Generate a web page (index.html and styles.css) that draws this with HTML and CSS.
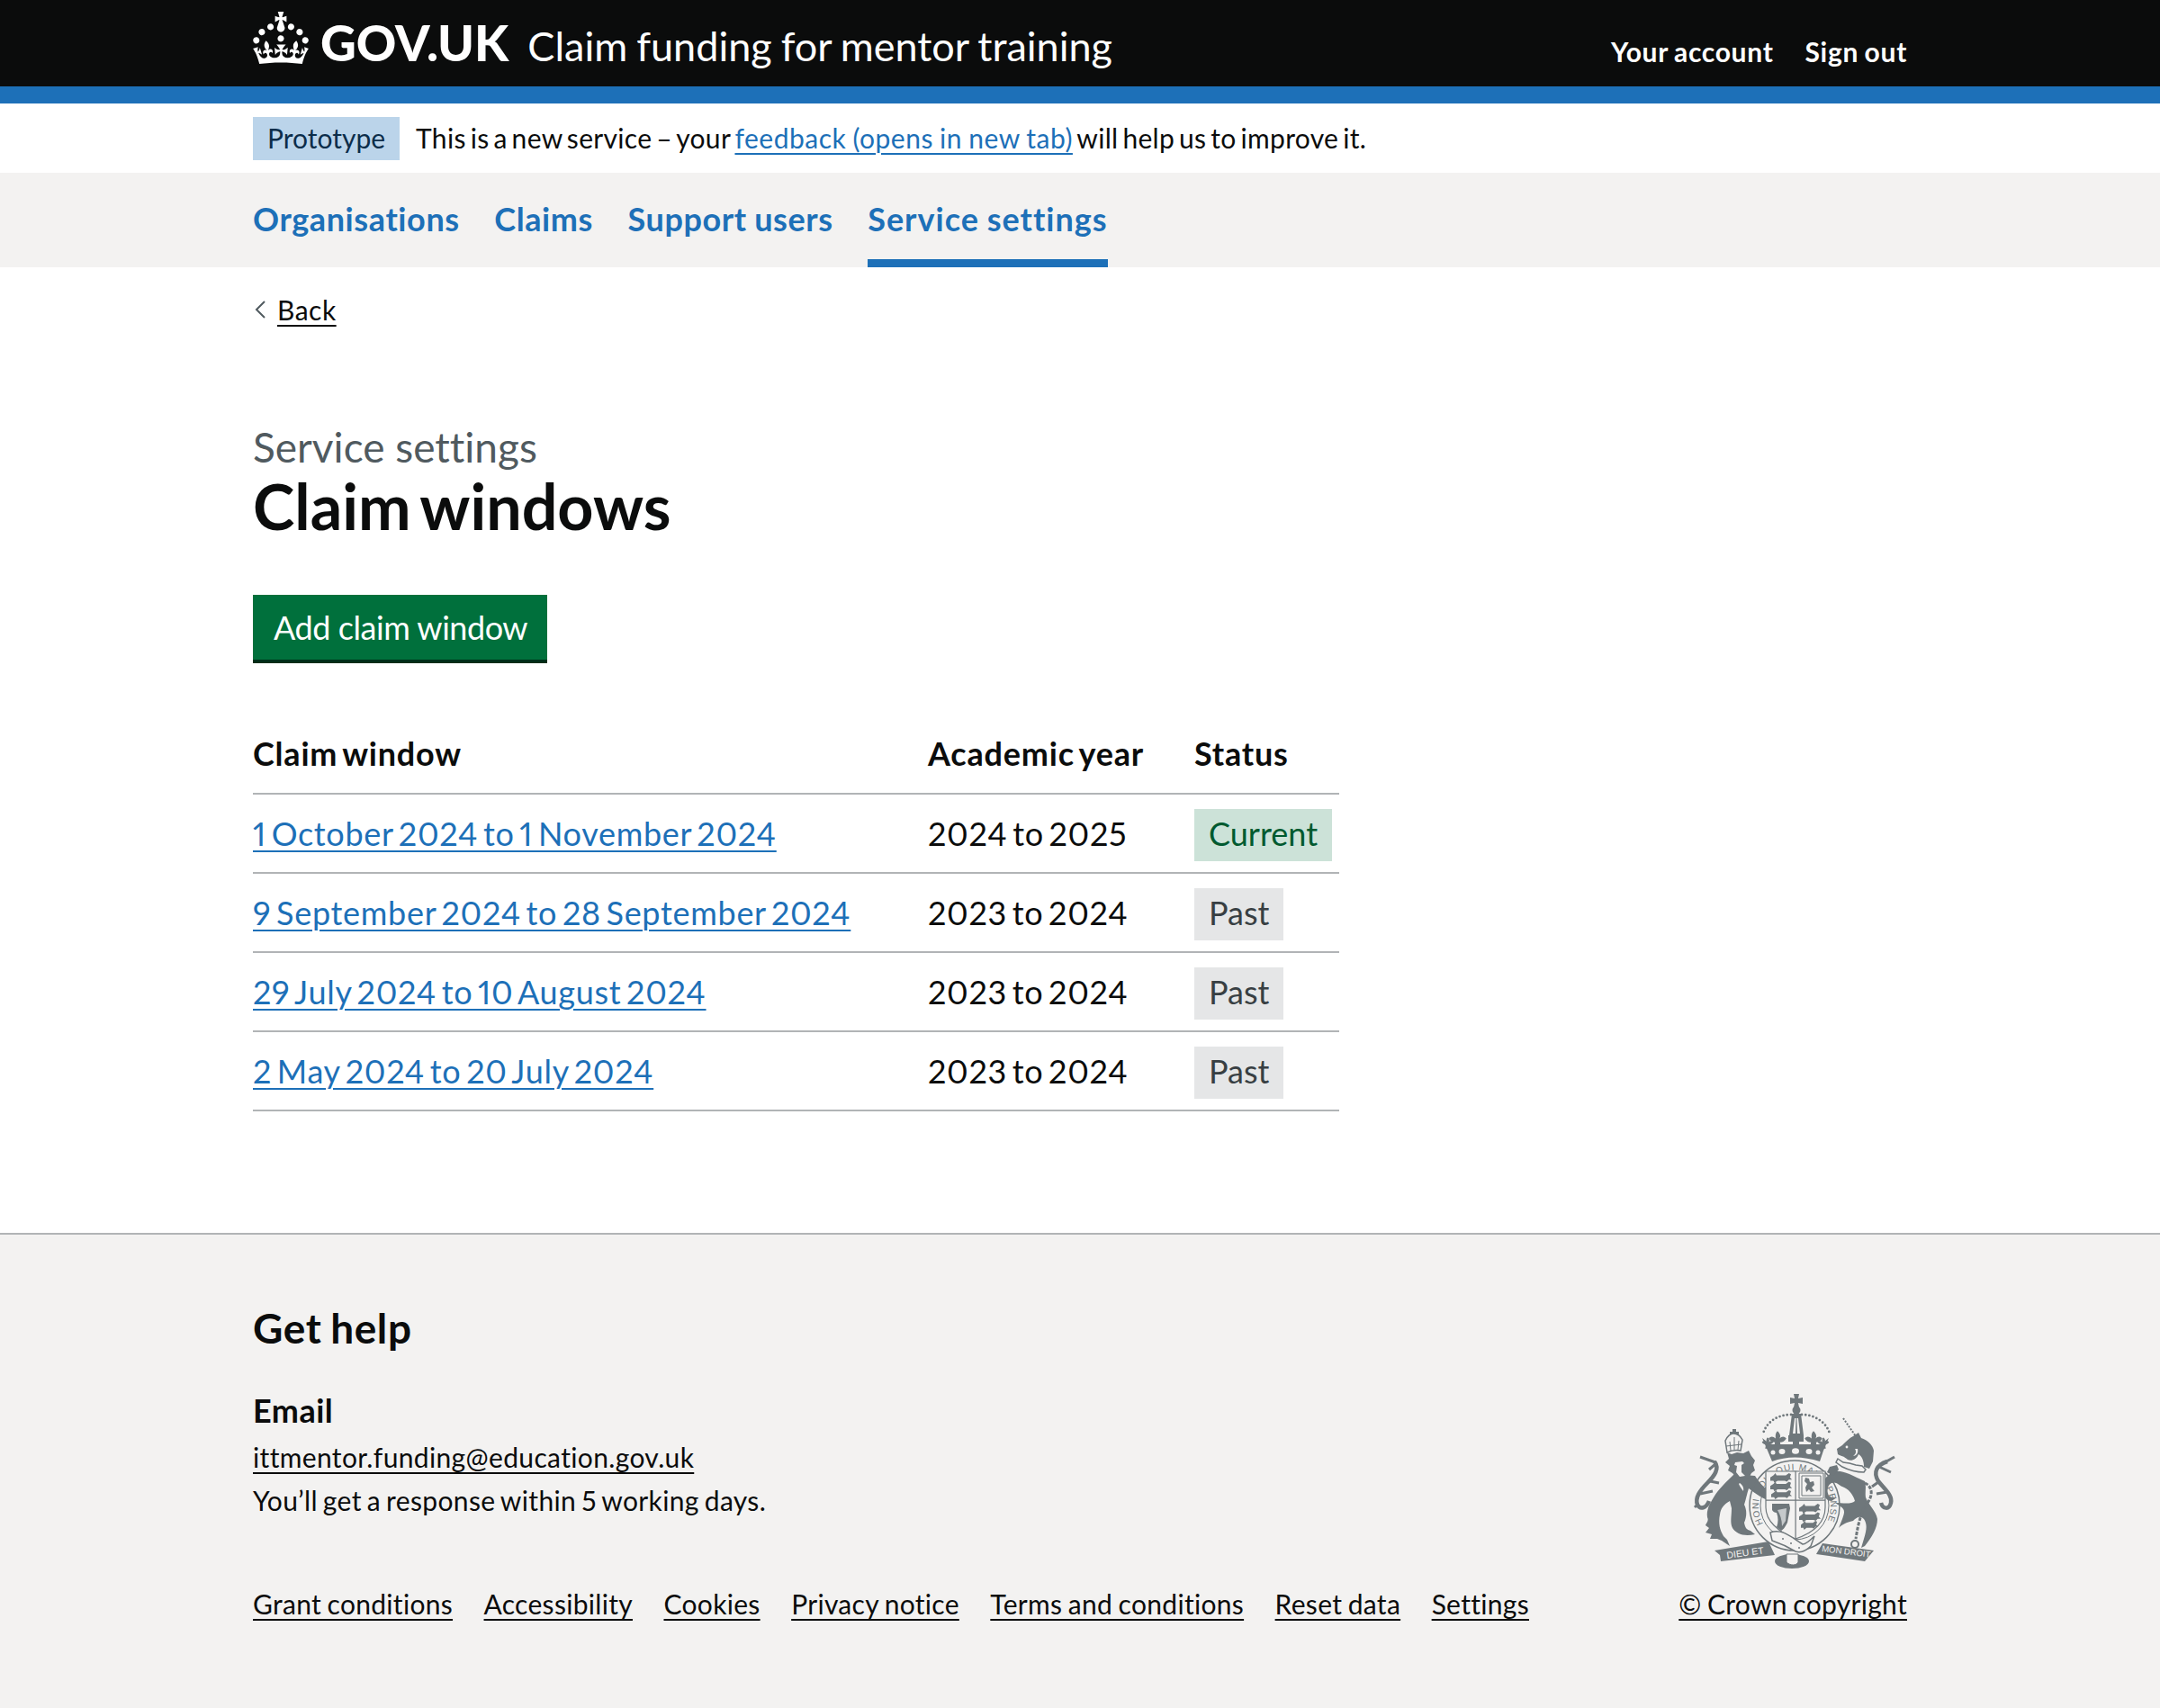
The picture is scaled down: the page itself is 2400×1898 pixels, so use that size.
FILE: index.html
```html
<!DOCTYPE html>
<html lang="en">
<head>
<meta charset="utf-8">
<title>Claim windows - Claim funding for mentor training</title>
<link rel="stylesheet" href="styles.css">
</head>
<body>
<header class="top">
  <div class="wrap top-row">
    <a class="logo" href="#">
      <svg class="crown" viewBox="0 0 32 30" aria-hidden="true"><path fill="currentColor" d="M22.6 10.4c-1 .4-2-.1-2.4-1-.4-.9.1-2 1-2.4.9-.4 2 .1 2.4 1s-.1 2-1 2.4m-5.9 6.7c-.9.4-2-.1-2.4-1-.4-.9.1-2 1-2.4.9-.4 2 .1 2.4 1s-.1 2-1 2.4m10.8-3.7c-1 .4-2-.1-2.4-1-.4-.9.1-2 1-2.4.9-.4 2 .1 2.4 1s0 2-1 2.4m3.3 4.8c-1 .4-2-.1-2.4-1-.4-.9.1-2 1-2.4.9-.4 2 .1 2.4 1s-.1 2-1 2.4M17 4.7l2.3 1.2V2.5l-2.3.7-.2-.2.9-3h-3.4l.9 3-.2.2c-.1.1-2.3-.7-2.3-.7v3.4L15 4.7c.1.1.1.2.2.2l-1.3 4c-.1.2-.1.4-.1.6 0 1.1.8 2 1.9 2.2h.7c1-.2 1.9-1.1 1.9-2.2 0-.2 0-.4-.1-.6l-1.3-4c-.1-.1 0-.2.1-.2m-7.6 5.700c.9.4 2-.1 2.4-1 .4-.9-.1-2-1-2.4-.9-.4-2 .1-2.4 1s0 2 1 2.4m-5 3c.9.4 2-.1 2.4-1 .4-.9-.1-2-1-2.4-.9-.4-2 .1-2.4 1s.1 2 1 2.4m-3.2 4.8c.9.4 2-.1 2.4-1 .4-1-.1-2-1-2.4-.9-.4-2 .1-2.4 1-.3.9.1 2 1 2.4m14.8 11c4.4 0 8.6.3 12.3.8 1.1-4.5 2.4-7 3.7-8.8l-2.5-.9c.2 1.3.3 1.9 0 2.7-.4-.4-.8-1.1-1.1-2.3l-1.2 4c.7-.5 1.3-.8 2-.9-1.1 2.5-2.6 3.1-3.5 3-1.1-.2-1.7-1.2-1.5-2.1.3-1.2 1.5-1.5 2.1-.1 1.1-2.3-.8-3-2-2.3 1.9-1.9 2.1-3.5.6-5.6-2.1 1.6-2.1 3.2-1.2 5.5-1.2-1.4-3.2-.6-2.5 1.6.9-1.4 2.1-.5 1.9.8-.2 1.1-1.7 2.1-3.5 1.9-2.7-.2-2.9-2.1-2.9-3.6.7-.1 1.9.5 2.9 1.9l.4-4.3c-1.1 1.1-2.1 1.4-3.2 1.4.4-1.2 2.1-3 2.1-3h-5.4s1.7 1.9 2.1 3c-1.1 0-2.1-.2-3.2-1.4l.4 4.3c1-1.4 2.2-2 2.9-1.9-.1 1.5-.2 3.4-2.9 3.6-1.9.2-3.4-.8-3.5-1.9-.2-1.3 1-2.2 1.9-.8.7-2.3-1.2-3-2.5-1.6.9-2.2.9-3.9-1.2-5.5-1.5 2-1.3 3.7.6 5.6-1.2-.7-3.1 0-2 2.3.6-1.4 1.8-1.1 2.1.1.2.9-.3 1.9-1.5 2.1-.9.2-2.4-.5-3.5-3 .6 0 1.2.3 2 .9l-1.2-4c-.3 1.1-.7 1.9-1.1 2.3-.3-.8-.2-1.4 0-2.7l-2.9.9C1.3 23 2.6 25.5 3.7 30c3.7-.5 7.9-.8 12.3-.8"/></svg>
      <span class="logotype">GOV.UK</span>
    </a>
    <a class="service" href="#">Claim funding for mentor training</a>
    <nav class="account">
      <a href="#">Your account</a>
      <a href="#">Sign out</a>
    </nav>
  </div>
</header>
<div class="blue-rule"></div>

<div class="wrap phase">
  <strong class="tag-proto">Prototype</strong>
  <span class="phase-text">This is a new service – your <a class="link phase-link" href="#">feedback (opens in new tab)</a> will help us to improve it.</span>
</div>

<nav class="primary">
  <ul class="wrap primary-list">
    <li><a href="#">Organisations</a></li>
    <li><a href="#">Claims</a></li>
    <li><a href="#">Support users</a></li>
    <li class="is-active"><a href="#">Service settings</a></li>
  </ul>
</nav>

<main class="wrap main">
  <a class="back" href="#">
    <svg class="chevron" viewBox="0 0 12 20" aria-hidden="true"><path d="M11 1L2 10l9 9" fill="none" stroke="#505a5f" stroke-width="2"/></svg>
    <span class="back-text">Back</span>
  </a>
  <p class="caption">Service settings</p>
  <h1 class="title">Claim windows</h1>
  <a class="button" href="#">Add claim window</a>

  <table class="table">
    <thead>
      <tr><th class="col-a">Claim window</th><th class="col-b">Academic year</th><th>Status</th></tr>
    </thead>
    <tbody>
      <tr><td><a class="link" href="#">1 October 2024 to 1 November 2024</a></td><td>2024 to 2025</td><td><strong class="tag tag-green">Current</strong></td></tr>
      <tr><td><a class="link" href="#">9 September 2024 to 28 September 2024</a></td><td>2023 to 2024</td><td><strong class="tag tag-grey">Past</strong></td></tr>
      <tr><td><a class="link" href="#">29 July 2024 to 10 August 2024</a></td><td>2023 to 2024</td><td><strong class="tag tag-grey">Past</strong></td></tr>
      <tr><td><a class="link" href="#">2 May 2024 to 20 July 2024</a></td><td>2023 to 2024</td><td><strong class="tag tag-grey">Past</strong></td></tr>
    </tbody>
  </table>
</main>

<footer class="footer">
  <div class="wrap">
    <div class="help-row">
      <div class="help">
        <h2 class="help-title">Get help</h2>
        <h3 class="help-sub">Email</h3>
        <p class="help-line"><a class="dark-link" href="#">ittmentor.funding@education.gov.uk</a></p>
        <p class="help-line">You’ll get a response within 5 working days.</p>
      </div>
      <svg class="crest" viewBox="0 0 235 210" aria-hidden="true">
        <defs>
          <path id="beast" d="M0 4l3-2 2-2 1 2h9l3-2 2 1-1 3 2 2-3 0-2 2-2-1-7 0-3 2-1-2-3 0z"/>
          <path id="fleur" d="M0-12c2 2 3 4 1.500 6 2-2 4-2 5.500 0-1 2-3 3-5 3l1 5h-6l1-5c-2 0-4-1-5-3 1.500-2 3.500-2 5.500 0C-1.500-8-2-10 0-12z"/>
        </defs>
        <g fill="#6f777b">
          <!-- royal crown -->
          <path d="M118 9h6l-1 5 5-1v7l-5-1 1 5h-6l1-5-5 1v-7l5 1z"/>
          <circle cx="121" cy="27" r="4.500"/>
          <path d="M116 31h10l3 24h-16z"/>
          <use href="#fleur" transform="translate(100 67) scale(1.400)"/>
          <use href="#fleur" transform="translate(140 67) scale(1.400)"/>
          <path d="M117 50h7v5h5v7h-5v6h-7v-6h-5v-7h5z"/>
          <use href="#fleur" transform="translate(89 68) scale(.9)"/>
          <use href="#fleur" transform="translate(151 68) scale(.9)"/>
          <path d="M83 58L92 65H148L157 58 151 72 147 84C128 78 110 78 94 84L89 72Z"/>
          <!-- left supporter: lion -->
          <path d="M52 98C44 106 35 114 29 124C24 132 21 138 22 146C24 150 21 152 20 155L24 158 20 163 27 165 25 170 33 170 38 172 47 178 44 171 40 167C36 160 34 153 36 143C37 136 40 132 47 128L49 136C49 145 47 152 50 158C54 164 62 168 75 165L70 161C66 160 64 158 63 152C66 145 66 138 63 132C65 126 66 120 68 114C76 120 84 126 92 128L96 122C88 116 80 108 75 100Z"/>
          <path d="M44 74l5 2 6-2 7 1 6-3 3 6 4 5-2 5 2 6-4 3-3 6-6-2-7 2-5-6-5-3 2-5-5-4 4-4z"/>
          <path d="M50 48h4v3h3v3h-3v3h-4v-3h-3v-3h3z"/>
          <!-- right supporter: unicorn -->
          <path d="M160 96C170 92 180 98 197 106C199 112 197 118 198 124C202 134 209 138 211 148C211 158 205 168 197 178L193 180 196 170C199 160 200 154 196 148C192 144 188 146 184 150C176 152 172 154 168 158L172 148C174 142 176 138 170 134L164 130C172 130 182 132 186 128C184 120 178 114 172 112C168 110 165 106 160 108C156 110 154 116 157 122C158 124 162 124 166 124L160 128C156 128 154 126 152 122C150 114 150 104 156 100Z"/>
          <path d="M166 70L172 66C176 62 180 58 184 56L190 52 193 58C200 60 206 66 207 72L206 84 202 92 196 90C196 84 194 78 190 76C188 82 182 84 178 82C174 78 170 78 167 76Z"/>
          <path d="M158 90l8-2 2 5-6 7-7-4z"/>
        </g>
        <g fill="none" stroke="#6f777b">
          <!-- tails -->
          <path stroke-width="4.500" d="M30 84C36 92 30 100 22 108C14 116 8 124 11 132C14 138 21 136 24 128"/>
          <path stroke-width="3" d="M31 85L14 79M31 87L24 93M25 106L35 108M14 120L28 117M12 131L8 135"/>
          <path stroke-width="4.500" d="M222 84C210 88 206 96 212 106C220 116 228 122 226 130C224 138 217 137 215 130"/>
          <path stroke-width="3" d="M214 88L230 79M213 90L226 96M212 107L205 112M222 118L210 120"/>
          <!-- crown arches, horn and chain -->
          <path stroke-width="2.800" stroke-linecap="round" stroke-dasharray="0 4.200" d="M115 32C100 32 88 40 84 53"/>
          <path stroke-width="2.800" stroke-linecap="round" stroke-dasharray="0 4.200" d="M127 32C141 32 154 40 158 53"/>
          <path stroke-width="2" stroke-dasharray="2 1.500" d="M173 36L187 56"/>
          <path stroke-width="3" stroke-dasharray="4 1.500" d="M197 108C206 112 206 122 200 130C194 138 190 150 187 170"/>
          <circle cx="186" cy="176" r="4" stroke-width="2"/>
          <!-- garter ring -->
          <circle cx="119" cy="133" r="50" stroke-width="1.500"/>
          <circle cx="119" cy="133" r="38" stroke-width="1"/>
        </g>
        <!-- garter motto, partly hidden by the shield -->
        <path id="garter-arc" d="M84 153A40 40 0 1 1 154 153" fill="none"/>
        <text class="garter"><textPath href="#garter-arc" textLength="162" lengthAdjust="spacing">HONI SOIT QUI MAL Y PENSE</textPath></text>
        <!-- crown and beast highlights -->
        <g fill="#f3f2f1">
          <ellipse cx="105" cy="73" rx="3.500" ry="3"/>
          <ellipse cx="120" cy="72.500" rx="4" ry="3.200"/>
          <ellipse cx="135" cy="73" rx="3.500" ry="3"/>
          <circle cx="95" cy="74" r="2.500"/>
          <circle cx="145" cy="74" r="2.500"/>
          <path d="M119 36h1.500l-.5 17h-3zM123 36h-1.500l.5 17h3z"/>
          <path d="M53 85l8-1 2 2-3 2 0 8 4 4-6 1-4-5 1-7-3-1z"/>
          <circle cx="177" cy="68" r="1.400"/>
          <path d="M186 70c2 3 1 6-2 8 4 0 6-4 5-8z"/>
          <path d="M58 108c3 2 5 5 4 9-2-3-4-5-5-8z"/>
        </g>
        <path d="M87 95H153V135C153 155 135 165 120 170C114 168 104 163 96 155 91 150 87 143 87 135Z" fill="#f3f2f1" stroke="#6f777b" stroke-width="1.200"/>
        <!-- lion's crown and unicorn's collar -->
        <path d="M44 74l-2-13c2-5 6-8 9-8 4 0 8 3 10 7l-2 12c-5-1-10-.5-15 2z" fill="#f3f2f1" stroke="#6f777b" stroke-width="1.500"/>
        <path d="M48 72l-1-10M52 71V57M56 71l1-10M43 67l17-2" fill="none" stroke="#6f777b" stroke-width="1"/>
        <path d="M167 81l6 4 7 1 7 2 7 1 4 4-2 3c-8 0-16-2-24-6l-7-5z" fill="#f3f2f1" stroke="#6f777b" stroke-width="1.500"/>
        <!-- shield quarters -->
        <g fill="#6f777b">
          <path d="M119.500 95h1.200v75h-1.200zM87 126.500h66v1.200H87z"/>
          <use href="#beast" transform="translate(92 97) scale(1.150 1.200)"/>
          <use href="#beast" transform="translate(92 106.500) scale(1.150 1.200)"/>
          <use href="#beast" transform="translate(93 116) scale(1.100 1.100)"/>
          <use href="#beast" transform="translate(124 131) scale(1.150 1.200)"/>
          <use href="#beast" transform="translate(124 140.500) scale(1.150 1.200)"/>
          <use href="#beast" transform="translate(126 150) scale(.9 1.100)"/>
          <path d="M131 102l4 1 1 4 4-1 1 4-3 3 3 4-4 1-2-3-3 3-1-5 2-4-3-3z"/>
          <path d="M94 131h19l1 5-3 16c-3 6-5 8-7 9l-5-4c2-5 2-11 0-16-2 0-4-1-5-3z"/>
        </g>
        <path d="M124 97h27v28h-27zM127 100h21v22h-21z" fill="none" stroke="#6f777b" stroke-width="1"/>
        <path d="M100 138l10-2-1 14-4 6c0-7-2-13-5-18z" fill="#c5c9cb"/>
        <!-- motto scroll -->
        <ellipse cx="116" cy="195" rx="19" ry="8" fill="#6f777b"/>
        <path d="M110 187h13v9c-2 4-9 4-13 0z" fill="#f3f2f1" stroke="#6f777b"/>
        <path d="M92 163C105 158 115 168 128 176C132 176 136 172 141 167L137 178C132 183 126 186 120 184C110 178 100 174 94 172Z" fill="#f3f2f1" stroke="#6f777b" stroke-width="1.500"/>
        <g fill="#6f777b">
          <circle cx="106" cy="170" r="1"/>
          <circle cx="115" cy="175" r="1"/>
          <circle cx="124" cy="180" r="1"/>
          <path d="M30 183L90 173 97 188 37 195 36 188Z"/>
          <path d="M150 175L207 183 197 195 143 187Z"/>
        </g>
        <text x="44" y="192" class="motto" transform="rotate(-8 44 192)">DIEU ET</text>
        <text x="149" y="184" class="motto motto-small" transform="rotate(7 149 184)">MON DROIT</text>
      </svg>
    </div>
    <div class="foot-row">
      <ul class="foot-links">
        <li><a class="dark-link" href="#">Grant conditions</a></li>
        <li><a class="dark-link" href="#">Accessibility</a></li>
        <li><a class="dark-link" href="#">Cookies</a></li>
        <li><a class="dark-link" href="#">Privacy notice</a></li>
        <li><a class="dark-link" href="#">Terms and conditions</a></li>
        <li><a class="dark-link" href="#">Reset data</a></li>
        <li><a class="dark-link" href="#">Settings</a></li>
      </ul>
      <a class="dark-link" href="#">© Crown copyright</a>
    </div>
  </div>
</footer>
</body>
</html>
```

FILE: styles.css
```css
* { box-sizing: border-box; }
html, body { margin: 0; padding: 0; }
body {
  display: flex;
  flex-direction: column;
  min-height: 100vh;
  background: #fff;
  color: #0b0c0c;
  font-family: "Lato", "Liberation Sans", Arial, sans-serif;
  font-size: 36px;
  line-height: 48px;
  font-variant-ligatures: none;
  font-variant-numeric: proportional-nums;
}
a { color: inherit; text-decoration: none; }
ul { list-style: none; margin: 0; padding: 0; }
.wrap { width: 1838px; margin: 0 auto; }
.top { background: #0b0c0c; height: 96px; color: #fff; }
.top-row { display: flex; height: 96px; align-items: flex-start; }
.logo { display: flex; align-items: flex-start; padding-top: 13px; }
.crown { width: 62px; height: 58px; display: block; margin-right: 13px; }
.logotype { font-weight: 900; font-size: 55px; line-height: 66px; margin-top: 1px; }
.service { font-size: 45px; line-height: 60px; margin-left: 21px; padding-top: 21px; word-spacing: -1.500px; }
.account { margin-left: auto; display: flex; gap: 35px; font-size: 30px; font-weight: 700; line-height: 40px; padding-top: 37px; letter-spacing: .7px; word-spacing: -1.500px; }
.blue-rule { height: 19px; background: #1d70b8; }
.phase { display: flex; align-items: center; gap: 18px; height: 77px; font-size: 30px; }
.phase-text { letter-spacing: .3px; word-spacing: -3px; padding-bottom: 2px; }
.phase-link { letter-spacing: .5px; word-spacing: -1px; }
.tag-proto { background: #bbd4ea; color: #0c2d4a; font-weight: 400; height: 48px; line-height: 46px; padding: 0 16px; }
.link { color: #1d70b8; text-decoration: underline; text-underline-offset: 5px; text-decoration-thickness: 2px; }
.primary { background: #f3f2f1; height: 105px; }
.primary-list { display: flex; gap: 38.500px; height: 105px; }
.primary-list li { height: 105px; }
.primary-list a { display: block; height: 105px; line-height: 102px; font-weight: 700; color: #1d70b8; letter-spacing: .6px; word-spacing: -1px; }
.is-active a { border-bottom: 9px solid #1d70b8; letter-spacing: 1px; }
.main { padding-top: 23px; padding-bottom: 135px; }
.back { display: flex; align-items: center; height: 48px; font-size: 30px; }
.chevron { width: 12px; height: 20px; margin: 0 13px 0 2px; flex: none; }
.back-text { letter-spacing: .5px; text-decoration: underline; text-underline-offset: 5px; text-decoration-thickness: 2px; }
.caption { margin: 99px 0 0; color: #505a5f; font-size: 46px; line-height: 60px; }
.title { margin: -3px 0 0; font-size: 70px; line-height: 76px; font-weight: 700; word-spacing: -6px; }
.button { display: inline-block; margin-top: 61px; background: #00703c; color: #fff; border-bottom: 4px solid #002d18; height: 76px; line-height: 72px; padding: 0 22px 0 23px; letter-spacing: -.45px; }
.table { display: table; margin-top: 57px; width: 1207px; border-collapse: collapse; }
.table th { font-weight: 700; text-align: left; height: 88px; padding: 0 0 2px; border-bottom: 2px solid #b1b4b6; vertical-align: middle; letter-spacing: .8px; word-spacing: -4px; }
.table td { height: 88px; padding: 0; border-bottom: 2px solid #b1b4b6; vertical-align: middle; letter-spacing: .7px; word-spacing: -4.200px; }
.col-a { width: 750px; }
.col-b { width: 296px; }
.tag { display: inline-block; font-weight: 400; height: 58px; line-height: 54px; margin-top: 4px; padding: 0 16px; vertical-align: middle; letter-spacing: 0; }
.tag-green { background: #cce2d8; color: #005a30; }
.tag-grey { background: #e5e6e7; color: #383f43; }
.footer { flex: 1; background: #f3f2f1; border-top: 2px solid #b1b4b6; font-size: 30px; line-height: 48px; }
.help-row { display: flex; justify-content: space-between; align-items: flex-start; }
.help { letter-spacing: .35px; word-spacing: -2px; }
.help-title { margin: 0; padding-top: 74px; font-size: 46px; line-height: 60px; font-weight: 700; letter-spacing: .6px; }
.help-sub { margin: 37px 0 4px; font-size: 36px; line-height: 48px; font-weight: 700; letter-spacing: .5px; }
.help-line { margin: 0; }
.crest { width: 235px; height: 210px; margin: 168px 9px 0 0; flex: none; }
.garter { fill: #6f777b; font-family: "Liberation Sans", Arial, sans-serif; font-size: 10px; }
.motto { fill: #f3f2f1; font-family: "Liberation Sans", Arial, sans-serif; font-size: 10.500px; }
.motto-small { font-size: 9.500px; }
.foot-row { display: flex; justify-content: space-between; margin-top: 8px; letter-spacing: .3px; word-spacing: -1.500px; }
.foot-links { display: flex; gap: 34.500px; }
.dark-link { text-decoration: underline; text-underline-offset: 5px; text-decoration-thickness: 2px; }
```
